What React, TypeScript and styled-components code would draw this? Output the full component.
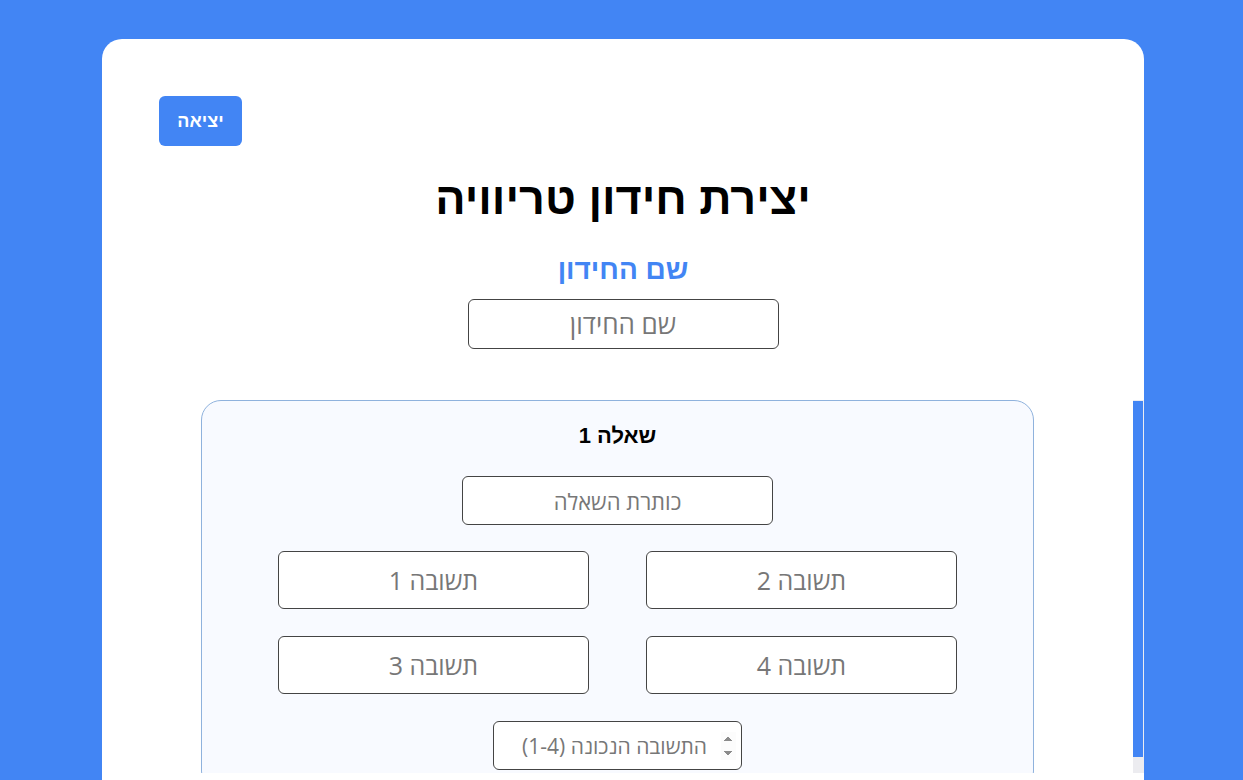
import styled, { createGlobalStyle } from 'styled-components';

const GlobalStyle = createGlobalStyle`
  html, body {
    margin: 0;
    padding: 0;
    height: 100%;
    overflow: hidden;
  }
  body {
    background: #4285f4;
    font-family: "Liberation Sans", Arial, sans-serif;
  }
`;

const Page = styled.div`
  direction: rtl;
  height: 100vh;
  box-sizing: border-box;
  padding: 39px 99px 0 102px;
`;

const Card = styled.div`
  background: #fff;
  border-radius: 20px 20px 0 0;
  height: 100%;
  overflow: hidden;
  display: flex;
  flex-direction: column;
`;

const Header = styled.div`
  display: flex;
  flex-direction: column;
  align-items: center;
  padding: 57px 57px 0;
`;

const TopBar = styled.div`
  align-self: stretch;
  display: flex;
  justify-content: flex-end;
`;

const ExitButton = styled.button`
  width: 83px;
  height: 50px;
  border: none;
  border-radius: 6px;
  background: #4285f4;
  color: #fff;
  font-family: "Liberation Sans", Arial, sans-serif;
  font-size: 18px;
  font-weight: bold;
  cursor: pointer;
`;

const Title = styled.h1`
  font-size: 45px;
  font-weight: bold;
  margin: 27px 0 0;
  color: #000;
`;

const SubTitle = styled.h2`
  font-size: 28px;
  font-weight: bold;
  color: #4285f4;
  margin: 29px 0 13px;
`;

const TextInput = styled.input<{ $w?: number; $h?: number; $size?: number }>`
  width: ${(p) => p.$w ?? 311}px;
  height: ${(p) => p.$h ?? 50}px;
  box-sizing: border-box;
  border: 1px solid #444;
  border-radius: 6px;
  background: #fff;
  text-align: center;
  direction: rtl;
  font-family: "Open Sans", "Liberation Sans", sans-serif;
  font-size: ${(p) => p.$size ?? 24}px;
  color: #333;
  outline: none;
  &::placeholder {
    color: #777;
  }
`;

const NumberInput = styled(TextInput)`
  direction: ltr;
  text-align: right;
  padding: 0 5px 0 8px;
  &::-webkit-inner-spin-button,
  &::-webkit-outer-spin-button {
    opacity: 1;
    margin-left: 14px;
  }
`;

const Questions = styled.div`
  margin-top: 51px;
  height: 373px;
  display: flex;
  direction: ltr;
`;

const QuestionsViewport = styled.div`
  flex: 1;
  overflow: hidden;
  direction: rtl;
`;

const ScrollTrack = styled.div`
  width: 11px;
  background: #ececf0;
  display: flex;
  flex-direction: column;
`;

const ScrollThumb = styled.div`
  width: 10px;
  margin-top: 1px;
  background: #4285f4;
`;

const QuestionBox = styled.div`
  width: 833px;
  box-sizing: border-box;
  margin: 0 auto;
  border: 1px solid #8fb2dd;
  border-radius: 20px;
  background: #f8faff;
  padding: 22px 0 20px;
  display: flex;
  flex-direction: column;
  align-items: center;
`;

const QuestionLabel = styled.h3`
  font-size: 22px;
  font-weight: bold;
  margin: 0 0 27px;
  color: #000;
`;

const AnswerGrid = styled.div`
  direction: ltr;
  display: grid;
  grid-template-columns: 311px 311px;
  column-gap: 57px;
  row-gap: 27px;
  margin: 26px 0 27px;
`;

export default function App() {
  // viewport 373px tall, content about 390px: thumb takes the ratio
  const thumb = Math.round((373 * 373) / 391);
  return (
    <>
      <GlobalStyle />
      <Page>
        <Card>
          <Header>
            <TopBar>
              <ExitButton>יציאה</ExitButton>
            </TopBar>
            <Title>יצירת חידון טריוויה</Title>
            <SubTitle>שם החידון</SubTitle>
            <TextInput placeholder="שם החידון" $size={26} />
          </Header>
          <Questions>
            <QuestionsViewport>
              <QuestionBox>
                <QuestionLabel>שאלה 1</QuestionLabel>
                <TextInput placeholder="כותרת השאלה" $h={49} $size={22} />
                <AnswerGrid>
                  <TextInput placeholder="תשובה 1" $h={58} $size={25} />
                  <TextInput placeholder="תשובה 2" $h={58} $size={25} />
                  <TextInput placeholder="תשובה 3" $h={58} $size={25} />
                  <TextInput placeholder="תשובה 4" $h={58} $size={25} />
                </AnswerGrid>
                <NumberInput
                  type="number"
                  placeholder={'\u202Bהתשובה הנכונה (1-4)\u202C'}
                  $w={249}
                  $h={49}
                  $size={21}
                />
              </QuestionBox>
            </QuestionsViewport>
            <ScrollTrack>
              <ScrollThumb style={{ height: thumb }} />
            </ScrollTrack>
          </Questions>
        </Card>
      </Page>
    </>
  );
}
